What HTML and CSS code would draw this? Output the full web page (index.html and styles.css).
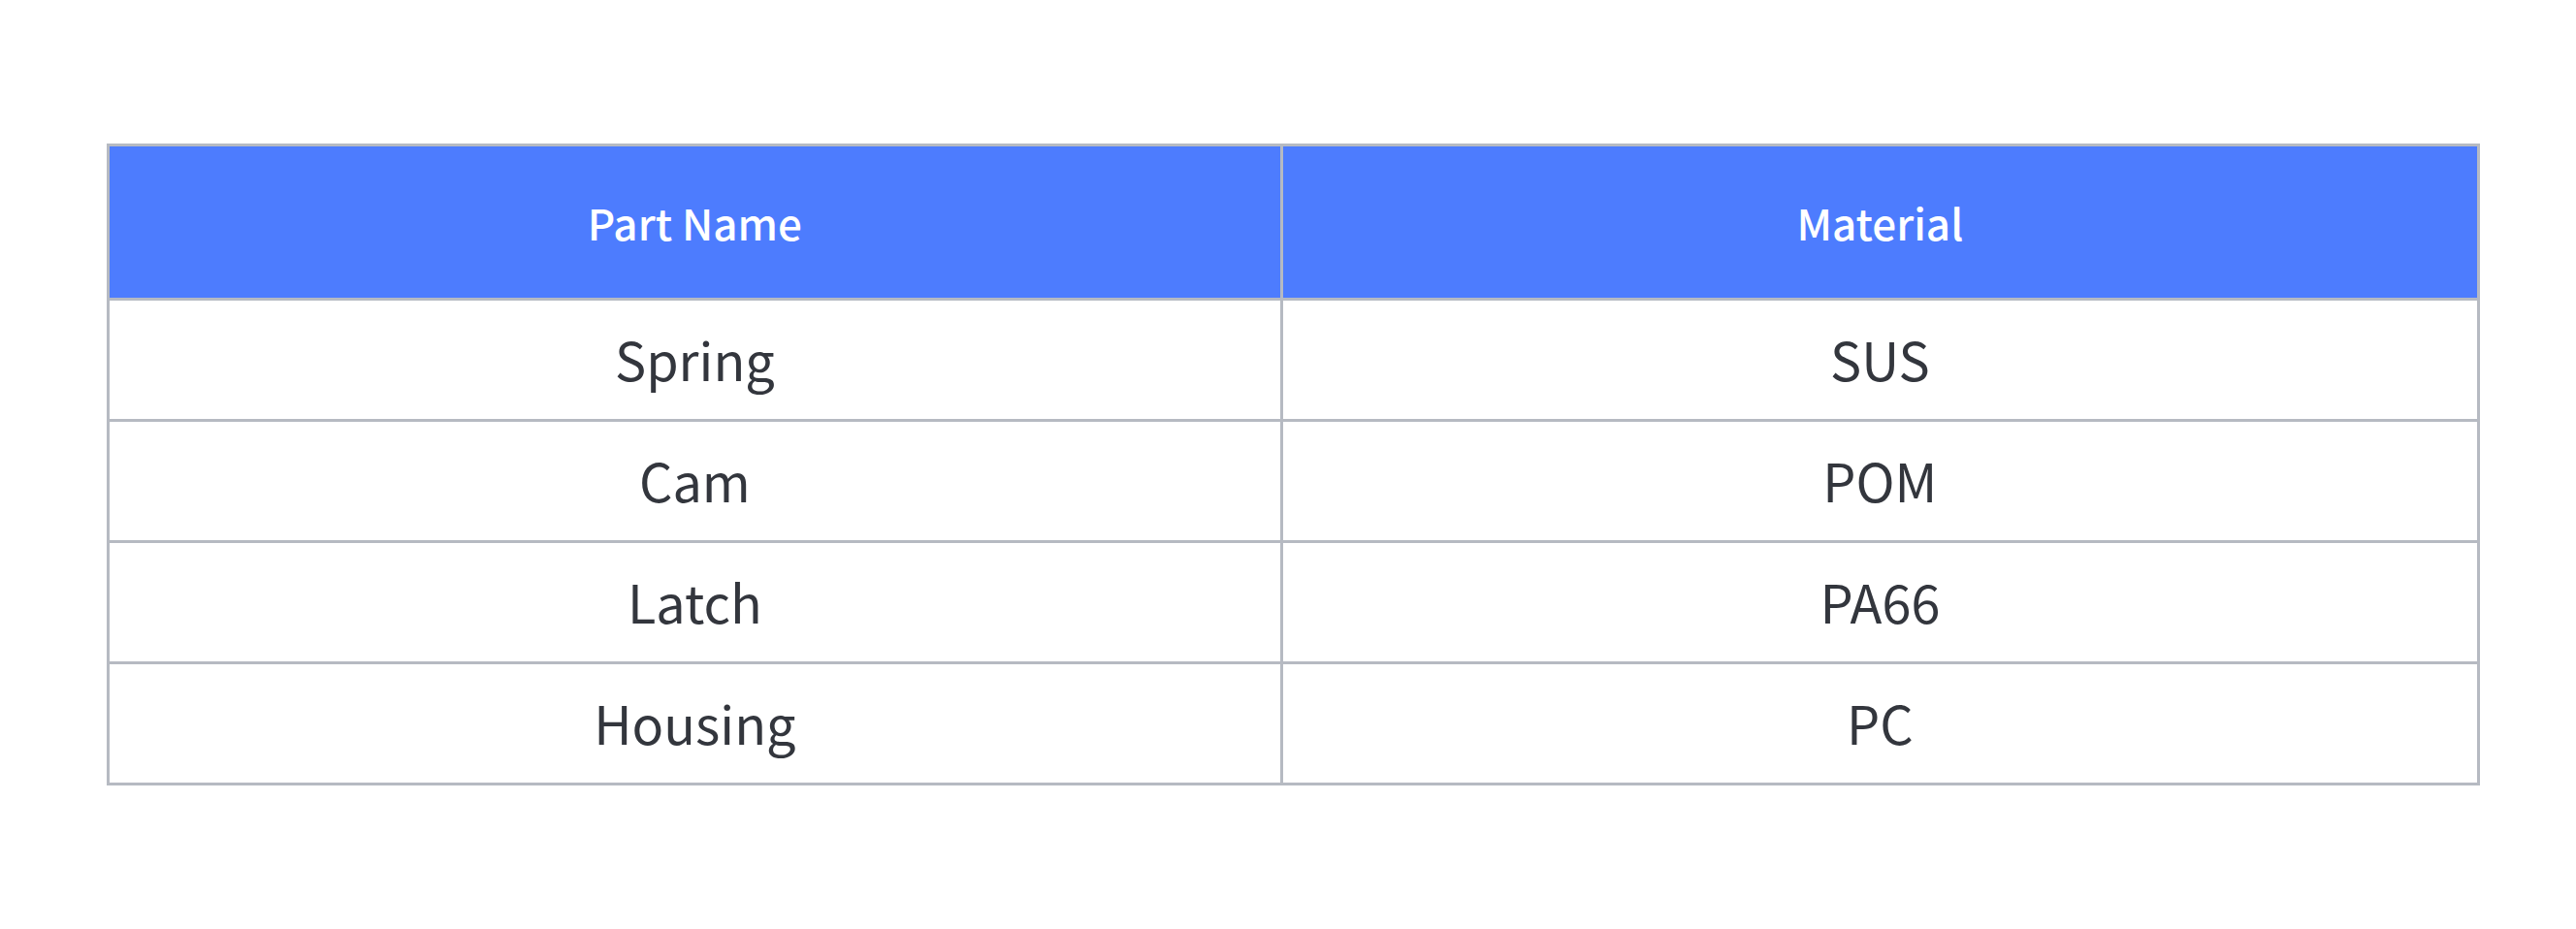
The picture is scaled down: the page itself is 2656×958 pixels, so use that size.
FILE: index.html
```html
<!DOCTYPE html>
<html>
<head>
<meta charset="utf-8">
<link rel="stylesheet" href="styles.css">
</head>
<body>
<div class="page">
  <table class="parts">
    <thead>
      <tr><th class="col-a">Part Name</th><th class="col-b">Material</th></tr>
    </thead>
    <tbody>
      <tr><td>Spring</td><td>SUS</td></tr>
      <tr><td>Cam</td><td>POM</td></tr>
      <tr><td>Latch</td><td>PA66</td></tr>
      <tr><td>Housing</td><td>PC</td></tr>
    </tbody>
  </table>
</div>
</body>
</html>
```

FILE: styles.css
```css
html, body {
  margin: 0;
  padding: 0;
  background: #ffffff;
}
.page {
  padding: 148px 99px 0 110px;
  font-family: "Noto Sans CJK SC", "Noto Sans", sans-serif;
}
.parts {
  width: 100%;
  border-collapse: collapse;
  table-layout: fixed;
}
.parts th, .parts td {
  border: 3px solid #b6bac2;
  text-align: center;
  vertical-align: middle;
  padding: 0;
}
.parts th {
  background: #4d7cfe;
  color: #ffffff;
  font-size: 44px;
  font-weight: 500;
  height: 156px;
}
.parts td {
  color: #33363d;
  font-size: 54px;
  font-weight: 400;
  height: 119px;
  padding-bottom: 3px;
}
.col-a { width: 49.5%; }
.col-b { width: 50.5%; }
```
